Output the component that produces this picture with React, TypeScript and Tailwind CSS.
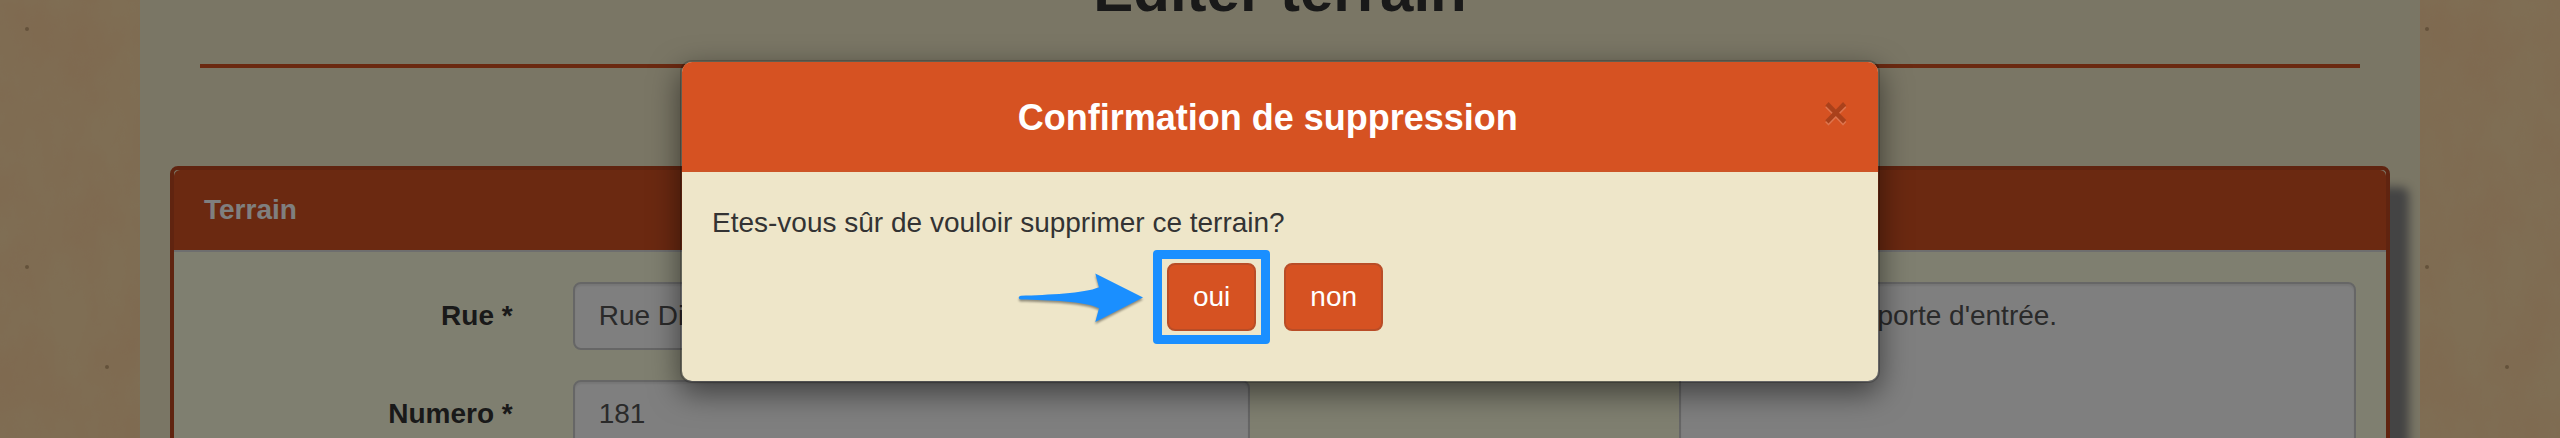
import React from "react";

const specks = [
  [27, 29],
  [27, 267],
  [107, 367],
];

function Parchment() {
  return (
    <svg className="absolute inset-0 h-full w-full" aria-hidden="true">
      <defs>
        <filter id="grain" x="0" y="0" width="100%" height="100%" colorInterpolationFilters="sRGB">
          <feTurbulence type="fractalNoise" baseFrequency="0.02 0.012" numOctaves="5" seed="8" stitchTiles="stitch" />
          <feColorMatrix values="0 0 0 0 1  0 0 0 0 0.8  0 0 0 0 0.6  2 0 0 0 -0.6" />
        </filter>
        <pattern id="paper" width="300" height="600" patternUnits="userSpaceOnUse">
          <rect width="300" height="600" fill="#ffdca8" />
          <rect width="300" height="600" filter="url(#grain)" opacity="0.5" />
          {specks.map(([x, y]) => (
            <circle key={`${x}-${y}`} cx={x} cy={y} r="2" fill="#c8a476" />
          ))}
        </pattern>
      </defs>
      <rect width="100%" height="100%" fill="url(#paper)" />
    </svg>
  );
}

const fieldClass =
  "w-full rounded-[8px] border-2 border-[#ccc] bg-white px-6 py-3 leading-10 text-[#555] shadow-[inset_0_2px_2px_rgba(0,0,0,0.075)] outline-none";

function Field({ id, label, value }: { id: string; label: string; value: string }) {
  return (
    <div className="grid grid-cols-3">
      <label htmlFor={id} className="pt-3.5 pr-[30px] text-right font-bold">
        {label}
      </label>
      <div className="col-span-2 px-[30px]">
        <input id={id} type="text" defaultValue={value} className={`${fieldClass} block h-[68px]`} />
      </div>
    </div>
  );
}

function ArrowHint() {
  return (
    <svg
      viewBox="0 0 126 50"
      className="absolute top-[10px] right-[calc(100%+23px)] h-[50px] w-[126px] overflow-visible drop-shadow-[0_2px_1px_rgba(0,0,0,0.4)]"
      aria-hidden="true"
    >
      <path
        d="M3 22.8 C30 21.6 66 20.5 81 14.2 L77.3 0.5 L125 24.5 L77.3 49 L81 35.2 C66 28.5 32 27.2 3 26.6 C0 26.4 0 23 3 22.8 Z"
        fill="#1a8fff"
      />
    </svg>
  );
}

const buttonClass =
  "block h-[68px] cursor-pointer rounded-[8px] border-2 border-[#b94d27] bg-[#d65222] px-6 leading-10 text-white";

function ConfirmDialog() {
  return (
    <div
      role="dialog"
      aria-modal="true"
      aria-labelledby="confirm-title"
      className="mx-auto mt-[60px] w-full max-w-[1200px] overflow-hidden rounded-[12px] border-2 border-black/20 bg-[#eee6c9] bg-clip-padding shadow-[0_10px_30px_rgba(0,0,0,0.5)]"
    >
      <div className="flex items-start border-b-2 border-[#cd5526] bg-[#d65222] px-[30px] pt-[30px] pb-[26px]">
        <h4 id="confirm-title" className="flex-1 text-center text-[36px] leading-[52px] font-bold text-white">
          Confirmation de suppression
        </h4>
        <button
          type="button"
          aria-label="Fermer"
          className="cursor-pointer text-[42px] leading-[42px] font-bold text-black opacity-20 [text-shadow:0_2px_0_#fff]"
        >
          ×
        </button>
      </div>
      <div className="px-[30px] pt-[31px] pb-[50px]">
        <p className="leading-10">Etes-vous sûr de vouloir supprimer ce terrain?</p>
        <div className="flex justify-center gap-7 pt-5 pr-2.5">
          <div className="relative">
            <button type="button" className={buttonClass}>
              oui
            </button>
            <span className="pointer-events-none absolute -inset-x-[14px] -inset-y-[13px] rounded-[4px] border-[9px] border-[#1a8fff]" />
            <ArrowHint />
          </div>
          <button type="button" className={buttonClass}>
            non
          </button>
        </div>
      </div>
    </div>
  );
}

export default function App() {
  return (
    <div className="relative h-screen overflow-hidden bg-[#ffdca8] font-['Liberation_Sans',Arial,sans-serif] text-[28px] leading-10 text-[#333]">
      <Parchment />
      <main className="relative mx-auto -mt-[42px] min-h-[calc(100%+42px)] max-w-[2280px] bg-[#f4ecca] px-[30px]">
        <h1 className="text-center text-[60px] leading-[66px] font-bold">Editer terrain</h1>
        <hr className="mx-[30px] mt-10 mb-[98px] border-0 border-t-4 border-[#d65222]" />
        <section className="rounded-[8px] border-4 border-[#c04820] bg-[#ffffe0] shadow-[19px_21px_10px_#888]">
          <h3 className="rounded-t-[6px] border-b-2 border-[#ddd] bg-[#d65222] px-[30px] py-5 font-bold text-white">
            Terrain
          </h3>
          <form className="grid grid-cols-2 py-[30px]">
            <div className="flex flex-col gap-[30px]">
              <Field id="rue" label="Rue *" value="Rue Dieudonné Lefèvre" />
              <Field id="numero" label="Numero *" value="181" />
            </div>
            <div className="grid grid-cols-3">
              <div className="col-span-2 col-start-2 px-[30px]">
                <textarea
                  aria-label="Remarque"
                  rows={5}
                  defaultValue="Sonnette à la porte d'entrée."
                  className={`${fieldClass} block resize-none`}
                />
              </div>
            </div>
          </form>
        </section>
      </main>
      <div className="absolute inset-0 bg-black/50">
        <ConfirmDialog />
      </div>
    </div>
  );
}
